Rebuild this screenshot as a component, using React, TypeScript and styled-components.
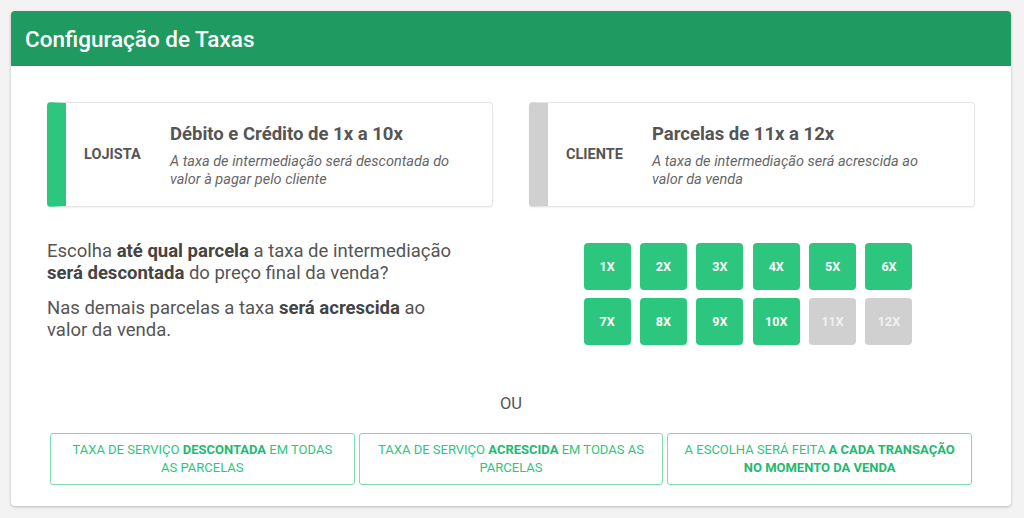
import styled, { createGlobalStyle, css } from 'styled-components';

const GlobalStyle = createGlobalStyle`
    html, body {
        margin: 0;
        padding: 0;
        background: #f3f3f3;
        font-family: Roboto, "Liberation Sans", Arial, sans-serif;
    }
`

const Page = styled.div`
    padding: 11px 13px 12px 11px;
    width: 1024px;
    height: 518px;
    box-sizing: border-box;
`

const Card = styled.section`
    background: #fff;
    border-radius: 4px;
    box-shadow: 0 1px 3px rgba(0, 0, 0, 0.25);
    overflow: hidden;
`

const Header = styled.header`
    background: #1f9a60;
    height: 55px;
    display: flex;
    align-items: center;
    padding-left: 14px;
`

const Title = styled.h1`
    margin: 0;
    color: #fff;
    font-size: 22.5px;
    font-weight: 500;
`

const Body = styled.div`
    padding: 36px 36px 21px;
`

const InfoRow = styled.div`
    display: grid;
    grid-template-columns: 1fr 1fr;
    gap: 36px;
`

const InfoCard = styled.div<{ accent: string }>`
    height: 105px;
    box-sizing: border-box;
    display: flex;
    align-items: center;
    border: 1px solid #e6e6e6;
    border-left: 19px solid ${({ accent }) => accent};
    border-radius: 4px;
    box-shadow: 0 1px 2px rgba(0, 0, 0, 0.06);
`

const InfoLabel = styled.span`
    width: 104px;
    box-sizing: border-box;
    padding-left: 18px;
    font-size: 14.5px;
    font-weight: 700;
    color: #555;
`

const InfoText = styled.div`
    flex: 1;
    padding-right: 22px;
    padding-top: 2px;
`

const InfoTitle = styled.div`
    font-size: 18.5px;
    font-weight: 700;
    color: #555;
    margin-bottom: 8px;
`

const InfoDesc = styled.div`
    font-size: 14.5px;
    font-style: italic;
    color: #666;
    line-height: 18px;
`

const ChoiceRow = styled.div`
    display: grid;
    grid-template-columns: 1fr 1fr;
    gap: 36px;
    margin-top: 36px;
    align-items: start;
`

const Question = styled.div`
    max-width: 415px;
    font-size: 18.5px;
    color: #555;
    line-height: 22px;
    margin-top: -3px;

    p {
        margin: 0 0 13px;
    }

    b {
        font-weight: 700;
        color: #444;
    }
`

const Grid = styled.div`
    display: grid;
    grid-template-columns: repeat(6, 47px);
    grid-auto-rows: 47px;
    gap: 8px 9.4px;
    justify-content: center;
    align-content: start;
    margin-right: 8px;
`

const Parcel = styled.button<{ active?: boolean }>`
    width: 47px;
    height: 47px;
    border: none;
    border-radius: 4px;
    font-family: inherit;
    font-size: 12.5px;
    font-weight: 700;
    color: #fff;
    background: #2cc67e;
    cursor: pointer;

    ${({ active }) => !active && css`
        background: #d0d0d0;
        color: #f1f1f1;
    `}
`

const Or = styled.div`
    text-align: center;
    font-size: 16.5px;
    color: #555;
    margin-top: 40px;
`

const OptionRow = styled.div`
    display: grid;
    grid-template-columns: repeat(3, 1fr);
    gap: 4px;
    margin: 20px 3px 0;
`

const Option = styled.button`
    height: 52px;
    background: #fff;
    border: 1px solid #7ddcae;
    border-radius: 3px;
    font-family: inherit;
    font-size: 13px;
    line-height: 18px;
    color: #2cc67e;
    text-transform: uppercase;
    padding: 0 16px;
    cursor: pointer;

    b {
        font-weight: 700;
        color: #22b971;
    }
`

const parcels = Array.from({ length: 12 }, (_, i) => i + 1);

const App = () => {
    return (
        <Page>
            <GlobalStyle />
            <Card>
                <Header>
                    <Title>Configuração de Taxas</Title>
                </Header>
                <Body>
                    <InfoRow>
                        <InfoCard accent="#2cc67e">
                            <InfoLabel>LOJISTA</InfoLabel>
                            <InfoText>
                                <InfoTitle>Débito e Crédito de 1x a 10x</InfoTitle>
                                <InfoDesc>A taxa de intermediação será descontada do valor à pagar pelo cliente</InfoDesc>
                            </InfoText>
                        </InfoCard>
                        <InfoCard accent="#d0d0d0">
                            <InfoLabel>CLIENTE</InfoLabel>
                            <InfoText>
                                <InfoTitle>Parcelas de 11x a 12x</InfoTitle>
                                <InfoDesc>A taxa de intermediação será acrescida ao valor da venda</InfoDesc>
                            </InfoText>
                        </InfoCard>
                    </InfoRow>
                    <ChoiceRow>
                        <Question>
                            <p>Escolha <b>até qual parcela</b> a taxa de intermediação <b>será descontada</b> do preço final da venda?</p>
                            <p>Nas demais parcelas a taxa <b>será acrescida</b> ao valor da venda.</p>
                        </Question>
                        <Grid>
                            {parcels.map(n => (
                                <Parcel key={n} active={n <= 10}>{n}X</Parcel>
                            ))}
                        </Grid>
                    </ChoiceRow>
                    <Or>OU</Or>
                    <OptionRow>
                        <Option>Taxa de serviço <b>descontada</b> em todas as parcelas</Option>
                        <Option>Taxa de serviço <b>acrescida</b> em todas as parcelas</Option>
                        <Option>A escolha será feita <b>a cada transação no momento da venda</b></Option>
                    </OptionRow>
                </Body>
            </Card>
        </Page>
    );
};

export default App;
